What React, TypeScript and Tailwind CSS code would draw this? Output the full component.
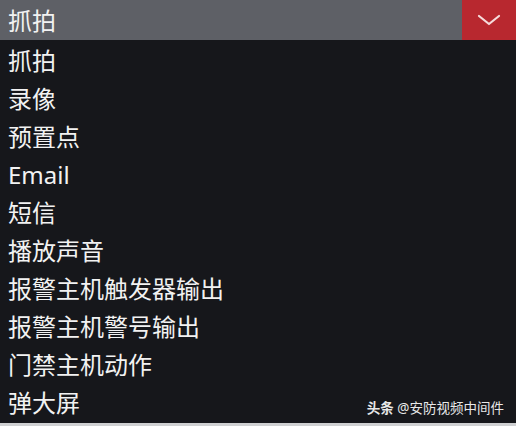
const options = [
  '抓拍',
  '录像',
  '预置点',
  'Email',
  '短信',
  '播放声音',
  '报警主机触发器输出',
  '报警主机警号输出',
  '门禁主机动作',
  '弹大屏',
];

export default function App() {
  return (
    <div
      className="flex h-[426px] w-[516px] flex-col overflow-hidden bg-[#16171b] text-[#f2f2f2]"
      style={{ fontFamily: '"Noto Sans", "Noto Sans CJK SC", sans-serif' }}
    >
      {/* selected value */}
      <div className="flex h-[40px] shrink-0 items-center bg-[#5e6066]">
        <span className="flex-1 pl-[8px] pt-[1px] text-[24px] leading-none">抓拍</span>
        <div className="flex h-full w-[54px] items-center justify-center bg-[#b8282f]">
          <svg width="24" height="12" viewBox="0 0 24 12" fill="none">
            <polyline
              points="2,2 12,10 22,2"
              stroke="#f6dcdc"
              strokeWidth="2.2"
              strokeLinecap="round"
              strokeLinejoin="round"
            />
          </svg>
        </div>
      </div>

      {/* option list */}
      <div className="relative flex flex-1 flex-col pt-[2px]">
        {options.map((opt) => (
          <div key={opt} className="flex h-[38px] items-center pl-[8px] text-[24px] leading-none">
            {opt}
          </div>
        ))}
        <div className="absolute bottom-[5px] right-[12px] text-[13.5px] text-[#e8e8e8]">
          <span className="font-bold">头条</span> @安防视频中间件
        </div>
      </div>
      <div className="h-[3px] shrink-0 bg-[#cfd0d2]" />
    </div>
  );
}
